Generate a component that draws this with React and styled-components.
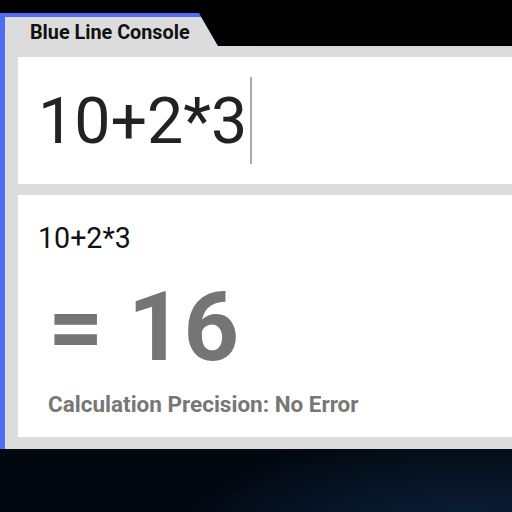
import React from 'react'
import styled, { createGlobalStyle } from 'styled-components'

const Global = createGlobalStyle`
  html, body {
    margin: 0;
    padding: 0;
    width: 512px;
    height: 512px;
    overflow: hidden;
    font-family: Roboto, "Liberation Sans", sans-serif;
    background: #000;
  }
`

const Screen = styled.div`
  width: 512px;
  height: 512px;
  overflow: hidden;
  padding-top: 13px;
  box-sizing: border-box;
  background:
    radial-gradient(ellipse 420px 160px at 470px 540px, rgba(14, 40, 70, 0.85), transparent 70%),
    linear-gradient(180deg, #000 0%, #02060b 60%, #020812 100%);
`

const Window = styled.div`
  width: 620px;
  border-left: 5px solid #4e6cf6;
  display: flex;
  flex-direction: column;
`

const TabRow = styled.div`
  height: 33px;
  display: flex;
`

const TabEdge = styled.div`
  width: 213px;
  height: 100%;
  background: #4e6cf6;
  clip-path: polygon(0 0, 194px 0, 213px 100%, 0 100%);
  padding-top: 4px;
  box-sizing: border-box;
`

const Tab = styled.div`
  height: 100%;
  background: #dcdcdc;
  clip-path: polygon(0 0, 196px 0, 213px 100%, 0 100%);
  display: flex;
  align-items: center;
  padding-left: 25px;
  font-size: 19.8px;
  font-weight: 700;
  color: #111;
  padding-top: 2px;
  box-sizing: border-box;
`

const Body = styled.div`
  background: #dcdcdc;
  padding: 11px 0 12px 13px;
  display: flex;
  flex-direction: column;
  gap: 11px;
`

const InputBox = styled.div`
  height: 127px;
  background: #fff;
  display: flex;
  align-items: center;
  padding-left: 20px;
  font-size: 64.5px;
  color: #222;
`

const Caret = styled.span`
  display: inline-block;
  width: 2px;
  height: 87px;
  background: #aaa;
  margin-left: 3px;
`

const ResultBox = styled.div`
  height: 242px;
  background: #fff;
  display: flex;
  flex-direction: column;
  padding: 26px 0 0 20px;
  box-sizing: border-box;
`

const Expr = styled.div`
  font-size: 28.6px;
  color: #111;
  line-height: 34px;
`

const Answer = styled.div`
  font-size: 97px;
  font-weight: 700;
  color: #757575;
  line-height: 100px;
  margin-top: 22px;
  padding-left: 10px;
`

const Precision = styled.div`
  font-size: 22.5px;
  font-weight: 700;
  color: #777;
  margin-top: 14px;
  padding-left: 10px;
`

export default function App() {
  return (
    <Screen>
      <Global />
      <Window>
        <TabRow>
          <TabEdge>
            <Tab>Blue Line Console</Tab>
          </TabEdge>
        </TabRow>
        <Body>
          <InputBox>
            10+2*3<Caret />
          </InputBox>
          <ResultBox>
            <Expr>10+2*3</Expr>
            <Answer>= 16</Answer>
            <Precision>Calculation Precision: No Error</Precision>
          </ResultBox>
        </Body>
      </Window>
    </Screen>
  )
}
